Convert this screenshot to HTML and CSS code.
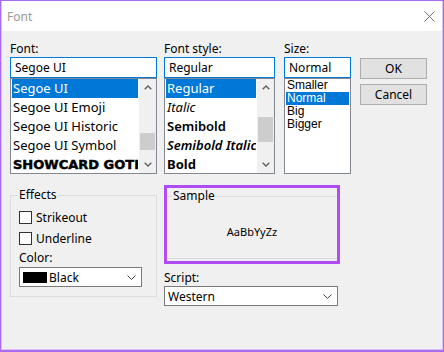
FILE: index.html
```html
<!DOCTYPE html>
<html lang="en">
<head>
  <meta charset="UTF-8" />
  <title>Font</title>
  <link rel="stylesheet" href="styles.css">
</head>
<body>
  <div class="window">
    <div class="frame">
      <div class="titlebar">
        <span class="title">Font</span>
        <svg class="close" width="11" height="11" viewBox="0 0 11 11">
          <path d="M0.5 0.5 L10.5 10.5 M10.5 0.5 L0.5 10.5" stroke="#6b6b6b" stroke-width="1" fill="none" />
        </svg>
      </div>

      <div class="content">
        <div class="top">
          <!-- Font family -->
          <div class="col col-font">
            <span class="lbl">Font:</span>
            <div class="field">Segoe UI</div>
            <div class="list">
              <ul class="items">
                <li class="sel">Segoe UI</li>
                <li>Segoe UI Emoji</li>
                <li>Segoe UI Historic</li>
                <li>Segoe UI Symbol</li>
                <li class="showcard">SHOWCARD GOTHIC</li>
              </ul>
              <div class="scrollbar">
                <div class="sb-btn">
                  <svg width="8" height="5" viewBox="0 0 8 5"><path d="M0.7 4.3 L4 1 L7.3 4.3" stroke="#606060" stroke-width="1.4" fill="none" /></svg>
                </div>
                <div class="sb-track"><div class="thumb thumb-font"></div></div>
                <div class="sb-btn">
                  <svg width="8" height="5" viewBox="0 0 8 5"><path d="M0.7 0.7 L4 4 L7.3 0.7" stroke="#606060" stroke-width="1.4" fill="none" /></svg>
                </div>
              </div>
            </div>
          </div>

          <!-- Font style -->
          <div class="col col-style">
            <span class="lbl">Font style:</span>
            <div class="field">Regular</div>
            <div class="list">
              <ul class="items">
                <li class="sel">Regular</li>
                <li class="it">Italic</li>
                <li class="semi">Semibold</li>
                <li class="semi it">Semibold Italic</li>
                <li class="bold">Bold</li>
              </ul>
              <div class="scrollbar">
                <div class="sb-btn">
                  <svg width="8" height="5" viewBox="0 0 8 5"><path d="M0.7 4.3 L4 1 L7.3 4.3" stroke="#606060" stroke-width="1.4" fill="none" /></svg>
                </div>
                <div class="sb-track"><div class="thumb thumb-style"></div></div>
                <div class="sb-btn">
                  <svg width="8" height="5" viewBox="0 0 8 5"><path d="M0.7 0.7 L4 4 L7.3 0.7" stroke="#606060" stroke-width="1.4" fill="none" /></svg>
                </div>
              </div>
            </div>
          </div>

          <!-- Size -->
          <div class="col col-size">
            <span class="lbl">Size:</span>
            <div class="field">Normal</div>
            <div class="list">
              <ul class="items size-items">
                <li>Smaller</li>
                <li class="sel">Normal</li>
                <li>Big</li>
                <li>Bigger</li>
              </ul>
            </div>
          </div>

          <div class="buttons">
            <button class="btn">OK</button>
            <button class="btn">Cancel</button>
          </div>
        </div>

        <div class="bottom">
          <fieldset class="group effects">
            <legend>Effects</legend>
            <label class="check"><span class="box"></span>Strikeout</label>
            <label class="check"><span class="box"></span>Underline</label>
            <span class="lbl color-lbl">Color:</span>
            <div class="combo color-combo">
              <span class="swatch"></span>
              <span class="combo-text">Black</span>
              <svg width="9" height="5" viewBox="0 0 9 5"><path d="M0.5 0.5 L4.5 4.5 L8.5 0.5" stroke="#444" stroke-width="1" fill="none" /></svg>
            </div>
          </fieldset>

          <div class="right">
            <div class="highlight">
              <fieldset class="group sample">
                <legend>Sample</legend>
                <div class="sample-text">AaBbYyZz</div>
              </fieldset>
            </div>
            <span class="lbl script-lbl">Script:</span>
            <div class="combo script-combo">
              <span class="combo-text">Western</span>
              <svg width="9" height="5" viewBox="0 0 9 5"><path d="M0.5 0.5 L4.5 4.5 L8.5 0.5" stroke="#444" stroke-width="1" fill="none" /></svg>
            </div>
          </div>
        </div>
      </div>
    </div>
  </div>
</body>
</html>
```

FILE: styles.css
```css
* {
  margin: 0;
  padding: 0;
  box-sizing: border-box;
}

body {
  font-family: 'Noto Sans', 'DejaVu Sans', sans-serif;
  font-size: 12px;
  color: #000;
  background: #fff;
}

ul {
  list-style: none;
}

.window {
  width: 444px;
  height: 352px;
  border: 1px solid #a96cef;
  border-bottom-width: 2px;
  display: flex;
  flex-direction: column;
}

.frame {
  flex: 1;
  display: flex;
  flex-direction: column;
  border: 1px solid #d9c1f8;
  border-top: none;
}

/* title bar */
.titlebar {
  height: 30px;
  background: #fff;
  display: flex;
  align-items: center;
  justify-content: space-between;
  padding: 0 7px 0 5px;
}

.title {
  color: #9a9a9a;
  font-size: 12px;
}

/* dialog body */
.content {
  flex: 1;
  background: #f0f0f0;
  padding: 10px 0 0 8px;
}

.top {
  display: flex;
}

.col {
  display: flex;
  flex-direction: column;
}

.col-font {
  width: 147px;
}

.col-style {
  width: 111px;
  margin-left: 7px;
}

.col-size {
  width: 67px;
  margin-left: 9px;
}

.lbl {
  display: block;
  height: 16px;
  line-height: 16px;
}

.field {
  height: 21px;
  line-height: 19px;
  border: 1px solid #0078d7;
  background: #fff;
  padding: 0 4px;
  white-space: nowrap;
  overflow: hidden;
}

.list {
  height: 96px;
  border: 1px solid #828790;
  background: #fff;
  display: flex;
}

.items {
  flex: 1;
  min-width: 0;
  overflow: hidden;
  padding: 0 1px;
}

.items li {
  height: 19px;
  line-height: 19px;
  font-size: 13px;
  padding-left: 1px;
  white-space: nowrap;
  overflow: hidden;
}

.items li.sel {
  background: #0078d7;
  color: #fff;
}

.items li.it {
  font-style: italic;
}

.items li.semi {
  font-weight: 600;
}

.items li.bold {
  font-weight: 700;
}

.items li.showcard {
  font-family: 'DejaVu Sans', sans-serif;
  font-weight: 700;
  font-size: 13px;
  -webkit-text-stroke: 0.5px #000;
}

.size-items li {
  height: 13px;
  line-height: 13px;
  font-family: 'Liberation Sans Narrow', 'Liberation Sans', sans-serif;
  font-size: 12px;
}

.scrollbar {
  width: 17px;
  background: #f0f0f0;
  display: flex;
  flex-direction: column;
}

.sb-btn {
  height: 17px;
  display: flex;
  align-items: center;
  justify-content: center;
}

.sb-track {
  flex: 1;
}

.thumb {
  margin: 0 1px;
  background: #cdcdcd;
}

.thumb-font {
  margin-top: 37px;
  height: 17px;
}

.thumb-style {
  margin-top: 21px;
  height: 25px;
}

.buttons {
  width: 67px;
  margin: 17px 0 0 9px;
  display: flex;
  flex-direction: column;
  gap: 5px;
}

.btn {
  height: 21px;
  background: #e1e1e1;
  border: 1px solid #adadad;
  font-family: inherit;
  font-size: 12px;
  color: #000;
}

/* lower half */
.bottom {
  display: flex;
  margin-top: 11px;
}

.group {
  border: 1px solid #dcdcdc;
}

.group legend {
  line-height: 16px;
  padding: 0 1px;
}

.effects {
  width: 147px;
  height: 110px;
  margin-top: 2px;
  padding: 0 0 0 7px;
  display: flex;
  flex-direction: column;
}

.check {
  display: flex;
  align-items: center;
  height: 21px;
  margin-left: 1px;
}

.check:first-of-type {
  margin-top: 4px;
}

.box {
  width: 13px;
  height: 13px;
  border: 1px solid #333;
  background: #fff;
  margin-right: 4px;
}

.color-lbl {
  margin: 1px 0 0 1px;
}

.combo {
  height: 20px;
  border: 1px solid #7a7a7a;
  background: #fff;
  display: flex;
  align-items: center;
}

.combo-text {
  flex: 1;
}

.color-combo {
  width: 123px;
  margin: 1px 0 0 1px;
  padding: 0 5px 0 3px;
}

.swatch {
  width: 24px;
  height: 11px;
  background: #000;
  margin-right: 2px;
}

.right {
  width: 176px;
  margin-left: 7px;
}

.highlight {
  height: 79px;
  border: 3px solid #b04cf6;
  padding: 0 0 2px;
}

.sample {
  height: 71px;
  border-left: none;
  border-right: none;
  padding: 0 0 0 5px;
  display: flex;
  align-items: center;
  justify-content: center;
}

.sample-text {
  font-size: 11px;
  margin-left: -5px;
}

.script-lbl {
  margin-top: 6px;
}

.script-combo {
  width: 174px;
  padding: 0 5px 0 3px;
}
```
